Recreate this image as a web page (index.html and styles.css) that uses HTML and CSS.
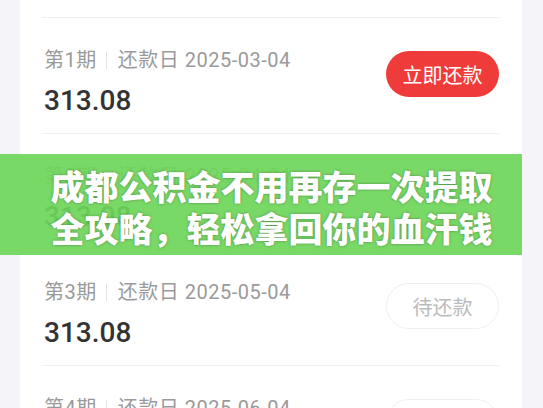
FILE: index.html
```html
<!DOCTYPE html>
<html>
<head>
<title>还款计划</title>
<meta name="viewport" content="width=device-width, initial-scale=1.0">
<link rel="stylesheet" href="styles.css">
</head>
<body>

<div class="page">
    <div class="card">
        <div class="peek"><span>共12期 剩余本金 3756.96</span></div>

        <div class="row">
            <div class="info">
                <div class="label"><span>第1期</span><i class="sep"></i><span>还款日 2025-03-04</span></div>
                <div class="amount">313.08</div>
            </div>
            <button class="btn btn-pay">立即还款</button>
        </div>

        <div class="row">
            <div class="info">
                <div class="label"><span>第2期</span><i class="sep"></i><span>还款日 2025-04-04</span></div>
                <div class="amount">313.08</div>
            </div>
            <button class="btn btn-wait">待还款</button>
        </div>

        <div class="row">
            <div class="info">
                <div class="label"><span>第3期</span><i class="sep"></i><span>还款日 2025-05-04</span></div>
                <div class="amount">313.08</div>
            </div>
            <button class="btn btn-wait">待还款</button>
        </div>

        <div class="row">
            <div class="info">
                <div class="label"><span>第4期</span><i class="sep"></i><span>还款日 2025-06-04</span></div>
                <div class="amount">313.08</div>
            </div>
            <button class="btn btn-wait">待还款</button>
        </div>
    </div>

    <div class="banner">成都公积金不用再存一次提取<br>全攻略，轻松拿回你的血汗钱</div>
</div>

</body>
</html>
```

FILE: styles.css
```css
html, body {
    margin: 0;
    padding: 0;
    height: 408px;
    overflow: hidden;
}
body {
    font-family: 'Roboto', 'Noto Sans CJK SC', sans-serif;
    background-color: #f4f4f9;
    color: #333;
}
.page {
    position: relative;
    height: 408px;
    padding: 0 21px 0 20px;
}
.card {
    background: #ffffff;
    height: 408px;
    padding: 0 23px 0 22px;
    overflow: hidden;
}
.peek {
    height: 17px;
    overflow: hidden;
    display: flex;
    align-items: flex-end;
    border-bottom: 1px solid #f0f0f0;
    padding-left: 2px;
}
.peek span {
    font-size: 18px;
    line-height: 20px;
    margin-bottom: 15px;
    color: #c8c8c8;
    white-space: nowrap;
}
.row {
    display: flex;
    justify-content: space-between;
    align-items: flex-start;
    height: 84px;
    padding-top: 31px;
    border-bottom: 1px solid #f0f0f0;
}
.info {
    padding-left: 2px;
}
.label {
    display: flex;
    align-items: center;
    font-size: 20px;
    line-height: 22px;
    letter-spacing: 0.5px;
    color: #9a9a9a;
}
.sep {
    width: 1px;
    height: 17px;
    background-color: #e2e2e2;
    margin: 0 11px 0 9px;
}
.amount {
    margin-top: 13px;
    font-size: 28px;
    line-height: 34px;
    font-weight: 500;
    color: #333;
}
.btn {
    width: 113px;
    height: 46px;
    border-radius: 23px;
    font-family: 'Noto Sans CJK SC', sans-serif;
    font-size: 20px;
    margin-top: 2px;
    padding: 0;
}
.btn-pay {
    background-color: #f03b3b;
    color: #ffffff;
    border: none;
}
.btn-wait {
    background-color: #ffffff;
    color: #bbbbbb;
    border: 1px solid #efefef;
}
.banner {
    position: absolute;
    top: 154px;
    left: 0;
    right: 21px;
    height: 101px;
    box-sizing: border-box;
    padding: 11px 0 6px 21px;
    background-color: rgba(110, 214, 90, 0.92);
    color: #ffffff;
    font-family: 'Noto Sans CJK SC', sans-serif;
    font-weight: 900;
    font-size: 34px;
    line-height: 42px;
    text-align: center;
    text-shadow: 0 0 3px rgba(0, 0, 0, 0.35);
}
```
